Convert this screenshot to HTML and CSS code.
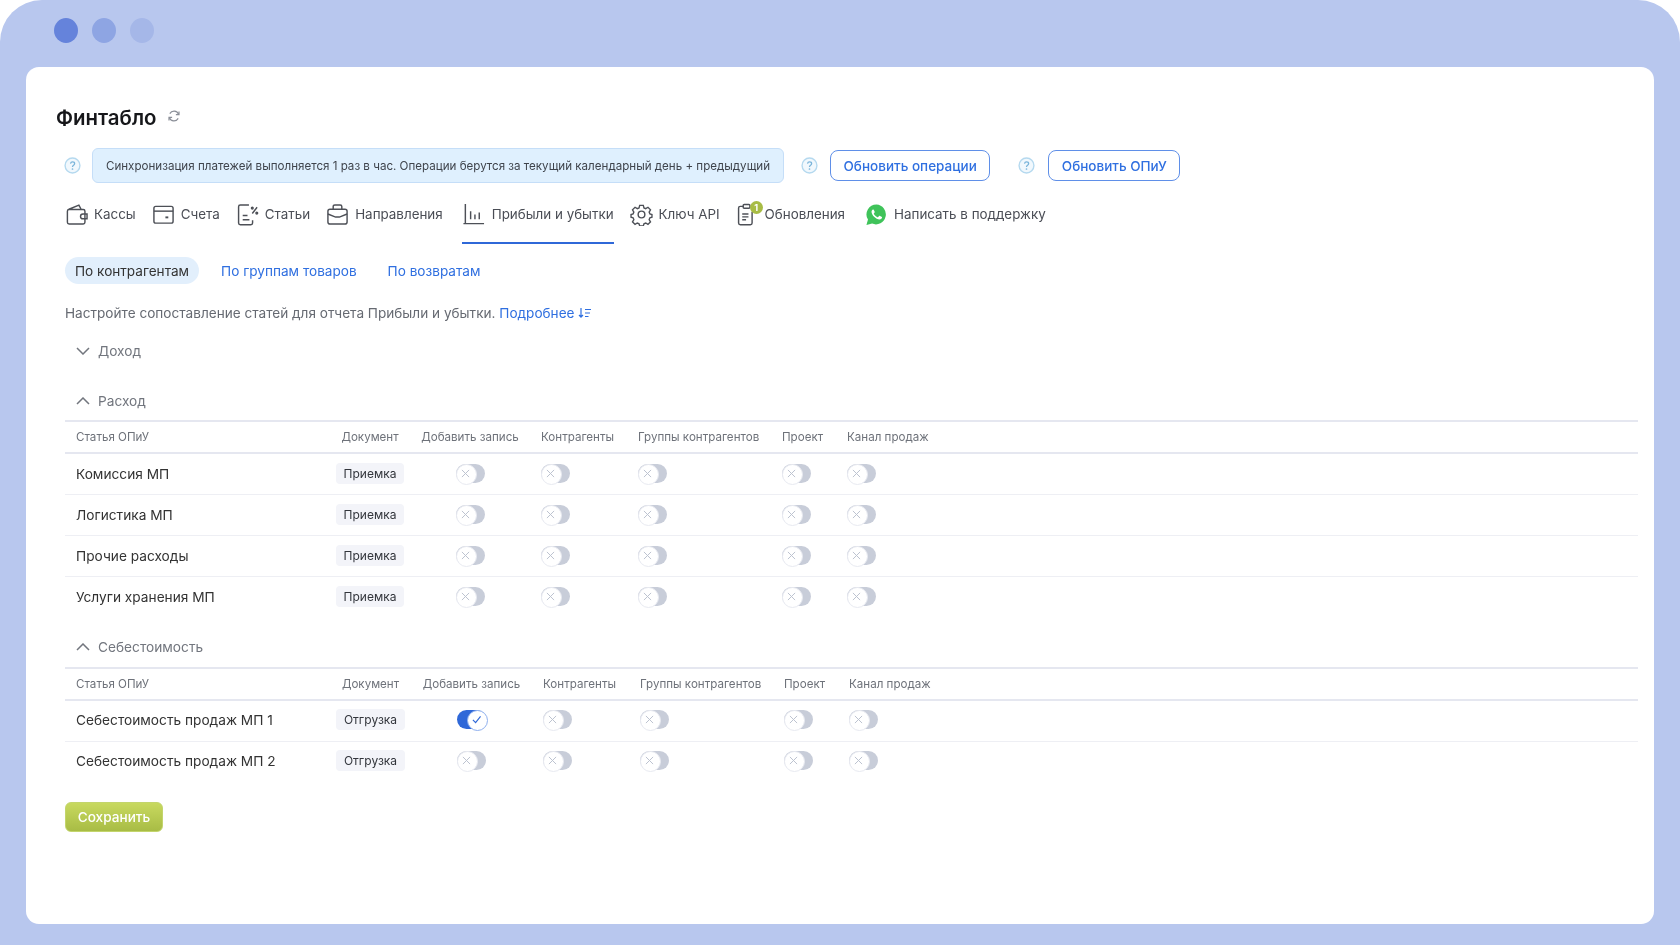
FILE: index.html
```html
<!DOCTYPE html>
<html lang="ru">
<head>
<meta charset="utf-8">
<title>Финтабло</title>
<link rel="stylesheet" href="styles.css">
</head>
<body>
<svg class="defs" width="0" height="0" aria-hidden="true">
  <symbol id="x" viewBox="0 0 10 10"><path d="M1 1l8 8M9 1l-8 8" fill="none" stroke="#bcc2cf" stroke-width="1.1"/></symbol>
  <symbol id="help" viewBox="0 0 16 16"><circle cx="8" cy="8" r="7" fill="#f1f8fd" stroke="#b5d9ef" stroke-width="1.3"/><path d="M6.100 6.200c.2-1 1-1.600 2-1.600s1.900.7 1.900 1.700c0 1.500-2 1.500-2 3" fill="none" stroke="#7ab4da" stroke-width="1.200"/><circle cx="8" cy="11.300" r=".8" fill="#7ab4da"/></symbol>
</svg>
<div class="frame">
  <div class="dots"><i class="dot d1"></i><i class="dot d2"></i><i class="dot d3"></i></div>
  <main class="panel">
    <div class="title-row">
      <h1 class="title">Финтабло</h1>
      <svg class="refresh" viewBox="0 0 14 14"><path d="M11.600 5.200A4.900 4.900 0 0 0 2.800 4.600M2.400 8.800a4.900 4.900 0 0 0 8.800.6" fill="none" stroke="#8b8f98" stroke-width="1.200"/><path d="M12 2.400v3.200H8.900M2 11.600V8.400h3.100" fill="none" stroke="#8b8f98" stroke-width="1.200"/></svg>
    </div>
    <div class="sync-row">
      <svg class="help help-first"><use href="#help"/></svg>
      <div class="alert">Синхронизация платежей выполняется 1 раз в час. Операции берутся за текущий календарный день + предыдущий</div>
      <svg class="help help-a"><use href="#help"/></svg>
      <button class="btn-outline btn-ops">Обновить операции</button>
      <svg class="help help-b"><use href="#help"/></svg>
      <button class="btn-outline">Обновить ОПиУ</button>
    </div>
    <nav class="tabs">
      <a class="tab">
        <svg class="tab-icon" viewBox="0 0 24 24"><path d="M2.500 8.500c0-1 .7-1.700 1.600-2L14.500 2.300l2.300 4.200M4 6.800h15c1 0 1.800.8 1.800 1.800v11.600c0 1-.8 1.800-1.800 1.800H4.300c-1 0-1.800-.8-1.800-1.800V8.500"/><path d="M23 11.500h-4.300a2.500 2.500 0 0 0 0 5H23z"/></svg>
        Кассы</a>
      <a class="tab">
        <svg class="tab-icon" viewBox="0 0 24 24"><rect x="2" y="3.500" width="20" height="17.500" rx="2"/><path d="M2 8.500h20"/><path d="M14 15h3" stroke-width="2"/></svg>
        Счета</a>
      <a class="tab">
        <svg class="tab-icon" viewBox="0 0 24 24"><path d="M13.500 2H4.500c-1 0-1.800.8-1.800 1.800v17c0 1 .8 1.800 1.800 1.800h11c1 0 1.800-.8 1.800-1.800v-2.800"/><path d="M7 13h5M7 17.500h7M22 4.500l-5 6.500"/><circle cx="17" cy="5.300" r=".9"/><circle cx="21.700" cy="10.500" r=".9"/></svg>
        Статьи</a>
      <a class="tab">
        <svg class="tab-icon" viewBox="0 0 24 24"><rect x="2" y="6.500" width="20" height="15.500" rx="2.200"/><path d="M7.500 6.500V3.700c0-1 .7-1.700 1.700-1.700h5.600c1 0 1.700.7 1.700 1.700v2.800M2 11.500l8 3.200h4l8-3.200"/></svg>
        Направления</a>
      <a class="tab active">
        <svg class="tab-icon" viewBox="0 0 24 24"><path d="M3.500 1v20.500H23M1.500 21.500h2M9 8.500v8.500M13.500 12v5M18 10v7"/></svg>
        Прибыли и убытки</a>
      <a class="tab">
        <svg class="tab-icon" viewBox="0 0 24 24"><path d="M10 2.500h4l.7 2.800 1.900.8 2.500-1.500 2.800 2.800-1.500 2.500.8 1.900 2.300.7v3l-2.300.7-.8 1.900 1.500 2.500-2.800 2.800-2.500-1.500-1.900.8-.7 2.300h-4l-.7-2.300-1.900-.8-2.500 1.500-2.800-2.800 1.500-2.500-.8-1.900-2.300-.7v-3l2.300-.7.8-1.900-1.500-2.500 2.800-2.800 2.500 1.500 1.900-.8z" transform="translate(.6 .1) scale(.95)"/><circle cx="12" cy="12" r="3.500"/></svg>
        Ключ API</a>
      <a class="tab">
        <span class="icon-wrap">
          <svg class="tab-icon" viewBox="0 0 24 24"><path d="M8 3.500H4.500c-1 0-1.800.8-1.800 1.800v15.500c0 1 .8 1.800 1.800 1.800H15c1 0 1.800-.8 1.800-1.800V9"/><rect x="7.500" y="1.500" width="7" height="4" rx="1"/><path d="M6.500 11.500h6.500M6.500 14.500h6.500M6.500 17.500h4"/></svg>
          <span class="badge-count">1</span>
        </span>
        Обновления</a>
      <a class="tab tab-support">
        <svg class="tab-icon wa" viewBox="0 0 24 24"><path d="M12 1.500a10.400 10.400 0 0 0-8.900 15.800L1.500 23l5.900-1.500A10.400 10.400 0 1 0 12 1.500z" fill="#3fc35a"/><path d="M8.300 6.700c-.6.100-1.500 1-1.500 2.500 0 3.500 4.500 8 8.400 8 1.500 0 2.500-1 2.600-2 .1-.5-.1-.7-2.200-1.700-.5-.2-.8-.2-1.100.2l-.8 1c-.2.200-.4.300-.8.100-1.600-.7-2.800-1.800-3.600-3.300-.2-.3-.1-.5.100-.7l.6-.8c.2-.3.200-.5.100-.8l-.9-1.900c-.2-.5-.5-.6-.9-.6z" fill="#fff"/></svg>
        Написать в поддержку</a>
    </nav>
    <div class="subtabs">
      <a class="subtab current">По контрагентам</a>
      <a class="subtab">По группам товаров</a>
      <a class="subtab">По возвратам</a>
    </div>
    <p class="desc">Настройте сопоставление статей для отчета Прибыли и убытки. <a class="more">Подробнее <svg class="sort" viewBox="0 0 14 12"><path d="M3 1v9M1 8l2 2.200L5 8M7 2.500h6M7 6h5M7 9.500h3.500" fill="none" stroke="#2f6fe0" stroke-width="1.200"/></svg></a></p>

    <div class="section section-income"><svg class="chev" viewBox="0 0 14 8"><path d="M1 1l6 6 6-6"/></svg>Доход</div>

    <div class="section section-exp"><svg class="chev" viewBox="0 0 14 8"><path d="M1 7l6-6 6 6"/></svg>Расход</div>
    <table class="grid">
      <colgroup><col class="c1"><col class="c2"><col class="c3"><col class="c4"><col class="c5"><col class="c6"><col class="c7"><col></colgroup>
      <thead><tr><th>Статья ОПиУ</th><th class="center">Документ</th><th class="center">Добавить запись</th><th>Контрагенты</th><th>Группы контрагентов</th><th>Проект</th><th>Канал продаж</th><th></th></tr></thead>
      <tbody>
        <tr><td>Комиссия МП</td><td class="center"><span class="doc">Приемка</span></td><td class="center"><span class="sw"><svg><use href="#x"/></svg></span></td><td><span class="sw"><svg><use href="#x"/></svg></span></td><td><span class="sw"><svg><use href="#x"/></svg></span></td><td><span class="sw"><svg><use href="#x"/></svg></span></td><td><span class="sw"><svg><use href="#x"/></svg></span></td><td></td></tr>
        <tr><td>Логистика МП</td><td class="center"><span class="doc">Приемка</span></td><td class="center"><span class="sw"><svg><use href="#x"/></svg></span></td><td><span class="sw"><svg><use href="#x"/></svg></span></td><td><span class="sw"><svg><use href="#x"/></svg></span></td><td><span class="sw"><svg><use href="#x"/></svg></span></td><td><span class="sw"><svg><use href="#x"/></svg></span></td><td></td></tr>
        <tr><td>Прочие расходы</td><td class="center"><span class="doc">Приемка</span></td><td class="center"><span class="sw"><svg><use href="#x"/></svg></span></td><td><span class="sw"><svg><use href="#x"/></svg></span></td><td><span class="sw"><svg><use href="#x"/></svg></span></td><td><span class="sw"><svg><use href="#x"/></svg></span></td><td><span class="sw"><svg><use href="#x"/></svg></span></td><td></td></tr>
        <tr><td>Услуги хранения МП</td><td class="center"><span class="doc">Приемка</span></td><td class="center"><span class="sw"><svg><use href="#x"/></svg></span></td><td><span class="sw"><svg><use href="#x"/></svg></span></td><td><span class="sw"><svg><use href="#x"/></svg></span></td><td><span class="sw"><svg><use href="#x"/></svg></span></td><td><span class="sw"><svg><use href="#x"/></svg></span></td><td></td></tr>
      </tbody>
    </table>

    <div class="section section-cost"><svg class="chev" viewBox="0 0 14 8"><path d="M1 7l6-6 6 6"/></svg>Себестоимость</div>
    <table class="grid grid-cost">
      <colgroup><col class="c1"><col class="c2"><col class="c3"><col class="c4"><col class="c5"><col class="c6"><col class="c7"><col></colgroup>
      <thead><tr><th>Статья ОПиУ</th><th class="center">Документ</th><th class="center">Добавить запись</th><th>Контрагенты</th><th>Группы контрагентов</th><th>Проект</th><th>Канал продаж</th><th></th></tr></thead>
      <tbody>
        <tr><td>Себестоимость продаж МП 1</td><td class="center"><span class="doc">Отгрузка</span></td><td class="center"><span class="sw on"><svg viewBox="0 0 10 10"><path d="M1 5.500l3 3 5.500-7" fill="none" stroke="#2f68d8" stroke-width="1.300"/></svg></span></td><td><span class="sw"><svg><use href="#x"/></svg></span></td><td><span class="sw"><svg><use href="#x"/></svg></span></td><td><span class="sw"><svg><use href="#x"/></svg></span></td><td><span class="sw"><svg><use href="#x"/></svg></span></td><td></td></tr>
        <tr><td>Себестоимость продаж МП 2</td><td class="center"><span class="doc">Отгрузка</span></td><td class="center"><span class="sw"><svg><use href="#x"/></svg></span></td><td><span class="sw"><svg><use href="#x"/></svg></span></td><td><span class="sw"><svg><use href="#x"/></svg></span></td><td><span class="sw"><svg><use href="#x"/></svg></span></td><td><span class="sw"><svg><use href="#x"/></svg></span></td><td></td></tr>
      </tbody>
    </table>
    <button class="save">Сохранить</button>
  </main>
</div>
</body>
</html>
```
FILE: styles.css
```css
* { box-sizing: border-box; }
html, body { margin: 0; height: 100%; background: #fff; }
body { font-family: Inter, "Liberation Sans", sans-serif; color: #333; overflow: hidden; }
.defs { display: block; height: 0; }
.frame { height: 945px; background: #b8c7ee; border-radius: 42px 42px 0 0; padding: 0 26px 21px; display: flex; flex-direction: column; }
.dots { height: 67px; flex: none; display: flex; align-items: center; gap: 14px; padding: 0 0 7px 28px; }
.dot { width: 24px; height: 25px; border-radius: 50%; }
.d1 { background: #6583db; }
.d2 { background: #8ea5e3; }
.d3 { background: #a5b7e8; }
.panel { flex: 1; background: #fff; border-radius: 13px; padding: 33px 16px 0 39px; filter: blur(.35px); }
.title-row { display: flex; align-items: center; gap: 11px; height: 34px; margin-left: -9px; }
.title { margin: 0; font-size: 20.400px; font-weight: 600; color: #16171a; }
.refresh { width: 14px; height: 14px; margin-top: -2px; }
.sync-row { display: flex; align-items: center; height: 35px; margin-top: 14px; }
.help { width: 17px; height: 17px; flex: none; }
.help-first { margin-left: -1px; margin-right: 11px; }
.help-a { margin: 0 12px 0 17px; }
.help-b { margin: 0 13px 0 28px; }
.alert { height: 35px; width: 692px; flex: none; background: #dff0fe; border: 1px solid #c5def8; border-radius: 6px; display: flex; align-items: center; justify-content: center; font-size: 11.600px; color: #3f444c; white-space: nowrap; }
.btn-outline { height: 31px; padding: 0 12.500px; background: #fff; border: 1.500px solid #5f8fe8; border-radius: 8px; color: #2f6fe0; font: 500 13.500px Inter, sans-serif; white-space: nowrap; }
.tabs { display: flex; margin-top: 3px; gap: 16px; }
.tab { display: flex; align-items: center; gap: 6px; height: 58px; border-bottom: 2px solid transparent; font-size: 13.400px; color: #4a4d55; white-space: nowrap; }
.tab.active { border-bottom-color: #2f68d8; margin-left: 3px; gap: 7px; }
.tab-support { margin-left: 4px; }
.tab-icon { width: 23px; height: 23px; flex: none; fill: none; stroke: #4d5057; stroke-width: 1.500; }
.tab-icon.wa { stroke: none; }
.icon-wrap { position: relative; display: flex; }
.badge-count { position: absolute; right: -4px; top: -2px; width: 13px; height: 13px; border-radius: 50%; background: #a8bc45; color: #fff; font-size: 9px; font-weight: 700; text-align: center; line-height: 13px; }
.subtabs { display: flex; align-items: center; margin-top: 13px; gap: 22px; }
.subtab { font-size: 13.600px; color: #2f6fe0; line-height: 29px; height: 27px; margin-right: 9px; }
.subtab.current { padding: 0 10px; background: #e2effc; border-radius: 14px; color: #333; margin-right: 0; }
.desc { margin: 19px 0 0; font-size: 13.600px; line-height: 20px; color: #666a72; }
.more { color: #2f6fe0; }
.sort { width: 14px; height: 12px; vertical-align: -1px; }
.section { display: flex; align-items: center; gap: 8px; height: 20px; padding: 2px 0 0 11px; font-size: 13.700px; color: #72767e; }
.chev { width: 14px; height: 8px; fill: none; stroke: #72767e; stroke-width: 1.500; }
.section-income { margin-top: 17px; }
.section-exp { margin-top: 30px; }
.section-cost { margin-top: 19px; }
.grid { width: 100%; table-layout: fixed; border-collapse: collapse; margin-top: 10px; }
.grid-cost { margin-top: 11px; }
.c1 { width: 265px; }
.c2 { width: 80px; }
.c3 { width: 120px; }
.c4 { width: 97px; }
.c5 { width: 144px; }
.c6 { width: 65px; }
.c7 { width: 103px; }
.grid-cost .c2 { width: 81px; }
.grid-cost .c3 { width: 121px; }
th { height: 32px; padding: 0 11px; font-size: 11.600px; font-weight: 400; text-align: left; color: #6e727a; border-top: 2px solid #e5e7f0; border-bottom: 2px solid #e5e7f0; white-space: nowrap; }
td { height: 41px; padding: 0 11px; font-size: 13.700px; color: #333; border-bottom: 1px solid #eeeff4; white-space: nowrap; }
.grid-cost td { padding-bottom: 2px; }
tbody tr:last-child td { border-bottom: 0; }
.center { text-align: center; padding-left: 0; padding-right: 0; }
.doc { display: inline-block; height: 21px; padding: 0 8px; line-height: 21px; background: #f3f4f9; border-radius: 4px; font-size: 12px; color: #33363c; vertical-align: middle; margin-bottom: 1px; }
.sw { display: inline-block; position: relative; width: 29px; height: 19px; border-radius: 10px; background: #c8cdd9; vertical-align: middle; margin-bottom: 1px; }
.sw::before { content: ""; position: absolute; left: 0; top: 0; width: 19px; height: 19px; border-radius: 50%; background: #fff; border: 1.500px solid #e8eaf1; }
.sw svg { position: absolute; left: 5px; top: 5px; width: 9px; height: 9px; }
.sw.on { background: #2f68d8; }
.sw.on::before { left: 10px; border-color: #8fb0ee; }
.sw.on svg { left: 15px; }
.save { display: block; width: 98px; height: 30px; margin-top: 20px; padding: 0; border: 1px solid #c3d56c; border-radius: 6px; background: linear-gradient(#c8d95f, #a8bc45); color: #fff; font: 500 13.600px Inter, sans-serif; }
```
